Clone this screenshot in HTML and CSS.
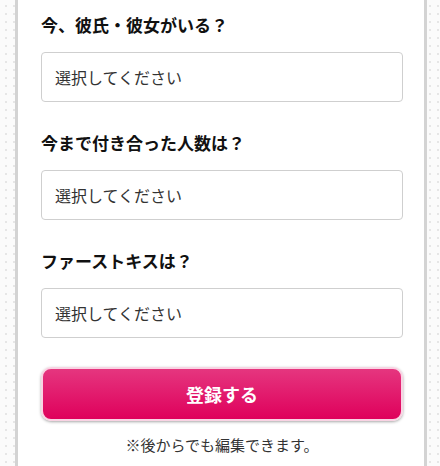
FILE: index.html
```html
<!DOCTYPE html>
<html lang="ja">
<head>
    <meta charset="UTF-8">
    <meta name="viewport" content="width=device-width, initial-scale=1.0">
    <title>プロフィール登録</title>
    <link rel="stylesheet" href="styles.css">
</head>
<body>
    <div class="panel">
        <form id="profileForm">
            <div class="form-group">
                <label for="partner">今、彼氏・彼女がいる？</label>
                <select id="partner">
                    <option value="">選択してください</option>
                    <option>いる</option>
                    <option>いない</option>
                </select>
            </div>

            <div class="form-group">
                <label for="count">今まで付き合った人数は？</label>
                <select id="count">
                    <option value="">選択してください</option>
                    <option>0人</option>
                    <option>1人</option>
                    <option>2〜3人</option>
                    <option>4人以上</option>
                </select>
            </div>

            <div class="form-group">
                <label for="kiss">ファーストキスは？</label>
                <select id="kiss">
                    <option value="">選択してください</option>
                    <option>まだ</option>
                    <option>済み</option>
                </select>
            </div>

            <button type="submit" class="submit-btn">登録する</button>
            <p class="note">※後からでも編集できます。</p>
        </form>
    </div>
</body>
</html>
```

FILE: styles.css
```css
html, body {
    height: 100%;
}

body {
    margin: 0;
    font-family: "Noto Sans CJK JP", "Noto Sans", sans-serif;
    color: #222;
    background-color: #fbfbfb;
    background-image: radial-gradient(#e6e6e6 1px, transparent 1.5px);
    background-size: 8px 8px;
    background-position: 2px 2px;
}

.panel {
    box-sizing: border-box;
    width: 412px;
    min-height: 100%;
    margin-left: 15px;
    padding: 13px 21px 0 23px;
    background-color: #fff;
    border-left: 3px solid #d3d3d3;
    border-right: 3px solid #d3d3d3;
}

.form-group {
    margin-bottom: 29px;
}

label {
    display: block;
    margin-bottom: 15px;
    font-size: 17px;
    line-height: 24px;
    font-weight: bold;
    color: #111;
}

select {
    display: block;
    width: 100%;
    height: 50px;
    padding: 0 13px;
    font-family: inherit;
    font-size: 16px;
    color: #333;
    background-color: #fff;
    border: 1px solid #cfcfcf;
    border-radius: 4px;
    appearance: none;
    -webkit-appearance: none;
    box-sizing: border-box;
}

.submit-btn {
    display: block;
    width: 100%;
    height: 54px;
    font-family: inherit;
    font-size: 18px;
    font-weight: bold;
    color: #fff;
    background: linear-gradient(#e5367f, #df005b);
    border: 2px solid #f9d3e3;
    border-radius: 10px;
    box-shadow: 0 1px 3px rgba(0, 0, 0, 0.35);
    cursor: pointer;
}

.note {
    margin: 13px 0 0;
    font-size: 15px;
    line-height: 22px;
    text-align: center;
    color: #333;
}
```
